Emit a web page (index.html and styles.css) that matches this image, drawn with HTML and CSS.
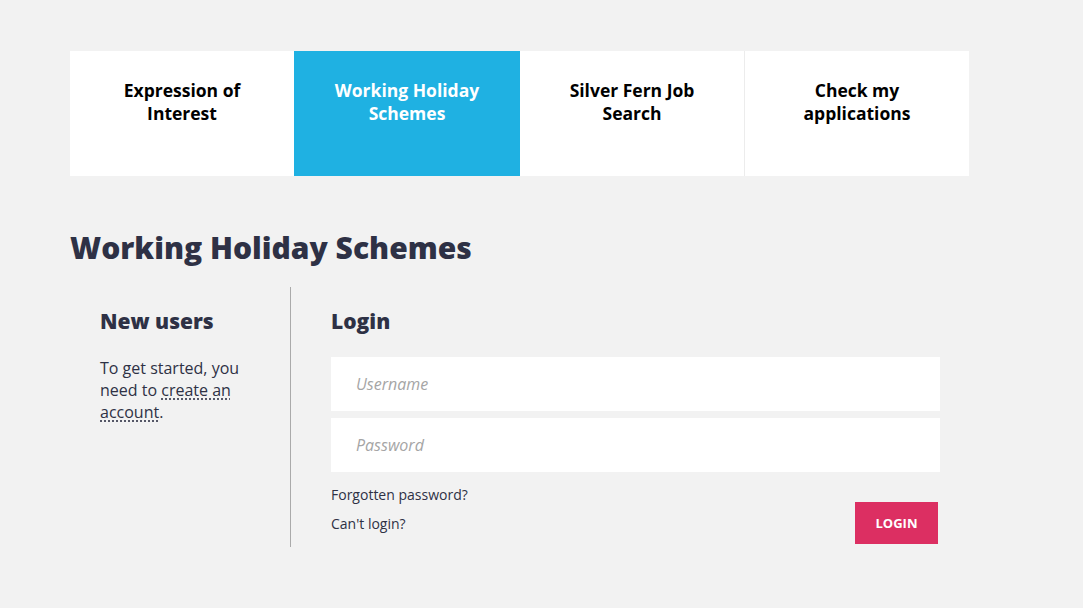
FILE: index.html
```html
<!DOCTYPE html>
<html lang="en">
<head>
  <meta charset="UTF-8">
  <meta name="viewport" content="width=device-width, initial-scale=1.0">
  <title>Working Holiday Schemes</title>
  <link rel="stylesheet" href="styles.css">
</head>
<body>

<div class="container">
  <ul class="tabs">
    <li><a href="#">Expression of<br>Interest</a></li>
    <li class="active"><a href="#">Working Holiday<br>Schemes</a></li>
    <li><a href="#">Silver Fern Job<br>Search</a></li>
    <li><a href="#">Check my<br>applications</a></li>
  </ul>

  <h1>Working Holiday Schemes</h1>

  <div class="panels">
    <div class="new-users">
      <h2>New users</h2>
      <p>To get started, you need to <a href="#">create an account</a>.</p>
    </div>
    <div class="login">
      <h2>Login</h2>
      <input type="text" placeholder="Username">
      <input type="password" placeholder="Password">
      <div class="login-footer">
        <div class="links">
          <a href="#">Forgotten password?</a>
          <a href="#">Can't login?</a>
        </div>
        <button>LOGIN</button>
      </div>
    </div>
  </div>
</div>

</body>
</html>
```

FILE: styles.css
```css
body {
  margin: 0;
  background-color: #f2f2f2;
  font-family: "Open Sans", Lato, sans-serif;
  color: #2e3145;
}
.container {
  width: 899px;
  margin: 0 0 0 70px;
  padding-top: 51px;
}
.tabs {
  display: flex;
  margin: 0;
  padding: 0;
  list-style: none;
}
.tabs li {
  flex: 1;
  height: 125px;
  background-color: #fff;
  border-left: 1px solid #ececec;
}
.tabs li:first-child {
  border-left: none;
}
.tabs li.active {
  background-color: #1fb1e2;
  border-left-color: #1fb1e2;
}
.tabs li.active + li {
  border-left-color: #1fb1e2;
}
.tabs a {
  display: block;
  padding-top: 28px;
  text-align: center;
  font-size: 17.5px;
  font-weight: 700;
  line-height: 23px;
  color: #000;
  text-decoration: none;
}
.tabs li.active a {
  color: #fff;
}
h1 {
  margin: 52px 0 19px;
  font-size: 30px;
  font-weight: 800;
  line-height: 40px;
}
.panels {
  display: flex;
}
.new-users {
  width: 190px;
  padding-left: 30px;
  border-right: 1px solid #aaa;
  height: 260px;
}
.login {
  flex: 1;
  padding: 0 29px 0 40px;
}
h2 {
  margin: 20px 0 22px;
  font-size: 21px;
  font-weight: 800;
  line-height: 28px;
}
.new-users p {
  margin: 0;
  font-size: 16px;
  line-height: 22px;
  width: 150px;
}
.new-users a {
  color: inherit;
  text-decoration: underline dotted;
  text-underline-offset: 3px;
}
.login input {
  display: block;
  box-sizing: border-box;
  width: 100%;
  height: 54px;
  margin-bottom: 7px;
  padding: 0 25px;
  border: none;
  background-color: #fff;
  font-family: inherit;
  font-size: 16px;
}
.login input::placeholder {
  color: #a5a5a5;
  font-style: italic;
}
.login-footer {
  display: flex;
  justify-content: space-between;
  align-items: flex-start;
  padding-top: 1px;
}
.links a {
  display: block;
  font-size: 14px;
  line-height: 29px;
  color: #2e3145;
  text-decoration: none;
}
.login button {
  width: 83px;
  height: 42px;
  margin: 22px 2px 0 0;
  border: none;
  background-color: #dc2f62;
  color: #fff;
  font-family: inherit;
  font-size: 13px;
  font-weight: 700;
}
```
